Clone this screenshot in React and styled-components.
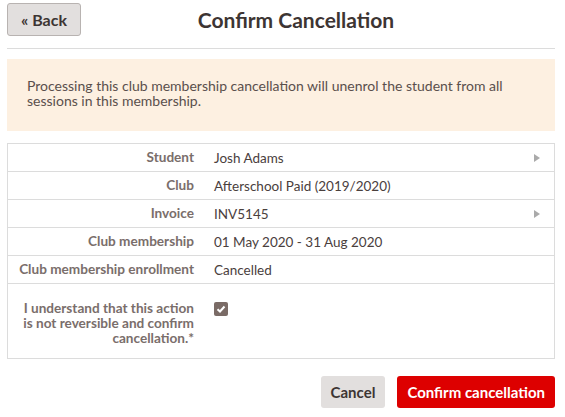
import styled, { createGlobalStyle } from 'styled-components';

const GlobalStyle = createGlobalStyle`
  body {
    margin: 0;
    font-family: Lato, "Open Sans", sans-serif;
    background: #fff;
  }
`;

const Page = styled.div`
  padding: 3px 10px 0 7px;
  display: flex;
  flex-direction: column;
`;

const Header = styled.div`
  display: flex;
  align-items: center;
  height: 33px;
  padding-bottom: 12px;
  border-bottom: 1px solid #dcdcdc;
`;

const BackButton = styled.button`
  height: 33px;
  width: 74px;
  background: #e2dfde;
  border: 1px solid #b8b3b1;
  border-radius: 3px;
  color: #3d3533;
  font-family: Lato, sans-serif;
  font-weight: 700;
  font-size: 16px;
  cursor: pointer;
`;

const Spacer = styled.div`
  width: 74px;
`;

const Title = styled.h1`
  flex: 1;
  margin: 0 0 0 30px;
  text-align: center;
  font-size: 21px;
  font-weight: 700;
  color: #3d3533;
`;

const Alert = styled.div`
  margin-top: 10px;
  background: #fdf0e1;
  padding: 19px 20px 23px;
  color: #5a4f4c;
  font-size: 14px;
  line-height: 15px;
`;

const Table = styled.div`
  margin-top: 12px;
  border: 1px solid #dcdcdc;
`;

const Row = styled.div`
  display: grid;
  grid-template-columns: 186px 1fr 20px;
  column-gap: 20px;
  align-items: ${p => (p.$tall ? 'start' : 'center')};
  min-height: 27px;
  padding: ${p => (p.$tall ? '17px 0 12px' : '0')};
  border-top: ${p => (p.$first ? 'none' : '1px solid #dcdcdc')};
`;

const Label = styled.div`
  padding-left: 8px;
  text-align: right;
  font-weight: 700;
  font-size: 13.6px;
  line-height: 15px;
  color: #7a6e6b;
`;

const Value = styled.div`
  font-size: 13.5px;
  color: #4a403d;
`;

const Arrow = styled.div`
  width: 0;
  height: 0;
  border-top: 4px solid transparent;
  border-bottom: 4px solid transparent;
  border-left: 6px solid #aaa;
`;

const Checkbox = styled.span`
  display: inline-flex;
  align-items: center;
  justify-content: center;
  width: 14px;
  height: 14px;
  border-radius: 2px;
  background: #7a6b66;
`;

const Actions = styled.div`
  display: flex;
  justify-content: flex-end;
  gap: 12px;
  margin-top: 17px;
`;

const Button = styled.button`
  height: 32px;
  padding: 0 10px;
  border: none;
  border-radius: 3px;
  font-family: Lato, sans-serif;
  font-weight: 700;
  font-size: 15px;
  background: ${p => (p.$primary ? '#dd0000' : '#e2dfde')};
  color: ${p => (p.$primary ? '#fff' : '#3d3533')};
  cursor: pointer;
`;

const rows = [
  { label: 'Student', value: 'Josh Adams', arrow: true },
  { label: 'Club', value: 'Afterschool Paid (2019/2020)' },
  { label: 'Invoice', value: 'INV5145', arrow: true },
  { label: 'Club membership', value: '01 May 2020 - 31 Aug 2020' },
  { label: 'Club membership enrollment', value: 'Cancelled' },
];

export default function App() {
  return (
    <Page>
      <GlobalStyle />
      <Header>
        <BackButton>« Back</BackButton>
        <Title>Confirm Cancellation</Title>
        <Spacer />
      </Header>
      <Alert>
        Processing this club membership cancellation will unenrol the student from all
        sessions in this membership.
      </Alert>
      <Table>
        {rows.map((r, i) => (
          <Row key={r.label} $first={i === 0}>
            <Label>{r.label}</Label>
            <Value>{r.value}</Value>
            {r.arrow ? <Arrow /> : <span />}
          </Row>
        ))}
        <Row $tall>
          <Label>I understand that this action is not reversible and confirm cancellation.*</Label>
          <Value>
            <Checkbox>
              <svg width="10" height="10" viewBox="0 0 10 10">
                <path d="M1.5 5.2 L4 7.5 L8.5 2.5" stroke="#fff" strokeWidth="2" fill="none" />
              </svg>
            </Checkbox>
          </Value>
          <span />
        </Row>
      </Table>
      <Actions>
        <Button>Cancel</Button>
        <Button $primary>Confirm cancellation</Button>
      </Actions>
    </Page>
  );
}
